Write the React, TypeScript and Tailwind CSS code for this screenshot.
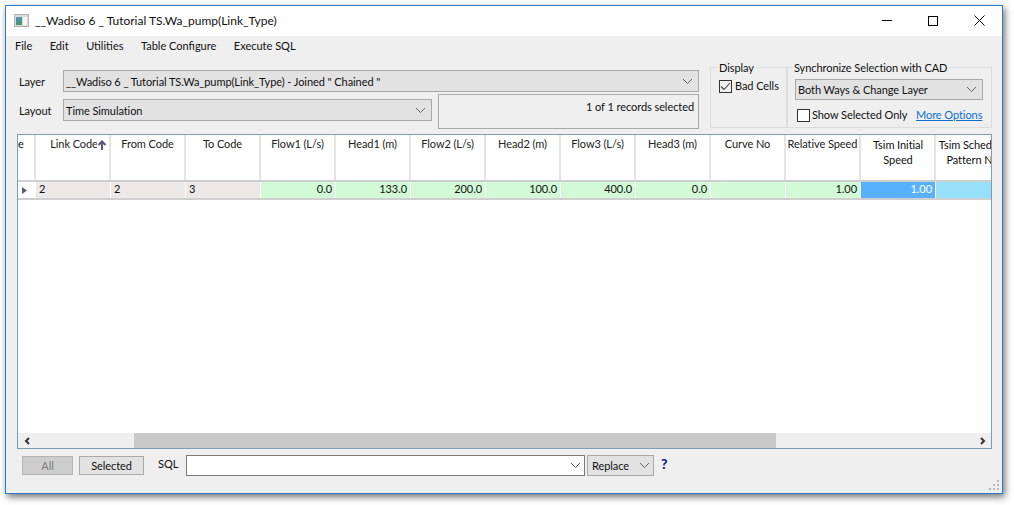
import React from 'react';

const FONT = "font-['Lato',sans-serif]";

const Chevron = ({ className = '' }: { className?: string }) => (
    <svg width="11" height="7" viewBox="0 0 11 7" className={className}>
        <path d="M1 1l4.5 4.5L10 1" fill="none" stroke="#606060" strokeWidth="1" />
    </svg>
);

const Select = ({ text, className = '' }: { text: string; className?: string }) => (
    <div className={`flex items-center justify-between border border-[#a9a9a9] bg-[#e2e2e2] pl-[2px] pr-[3px] ${className}`}>
        <span className="whitespace-pre">{text}</span>
        <Chevron className="mr-[2px] shrink-0" />
    </div>
);

const columns = [
    { title: 'Link Code', value: '2', kind: 'key', sort: true },
    { title: 'From Code', value: '2', kind: 'key' },
    { title: 'To Code', value: '3', kind: 'key' },
    { title: 'Flow1 (L/s)', value: '0.0', kind: 'ok' },
    { title: 'Head1 (m)', value: '133.0', kind: 'ok' },
    { title: 'Flow2 (L/s)', value: '200.0', kind: 'ok' },
    { title: 'Head2 (m)', value: '100.0', kind: 'ok' },
    { title: 'Flow3 (L/s)', value: '400.0', kind: 'ok' },
    { title: 'Head3 (m)', value: '0.0', kind: 'ok' },
    { title: 'Curve No', value: '', kind: 'ok' },
    { title: 'Relative Speed', value: '1.00', kind: 'ok' },
];

export default function App() {
    return (
        <div className={`h-[505px] w-[1014px] overflow-hidden bg-white pl-[5px] pt-[5px] text-[11px] leading-[15px] tracking-[-0.07px] text-[#111] ${FONT}`}>
            <div className="flex h-[489px] w-[998px] flex-col border border-[#2b7cc9] bg-[#efefef] shadow-[2px_3px_7px_rgba(0,0,0,0.55)]">
                {/* Title bar */}
                <div className="flex h-[30px] shrink-0 items-center bg-white pb-[1px] pl-[8px]">
                    <svg width="15" height="13" viewBox="0 0 15 13" className="mr-[6px]">
                        <defs>
                            <linearGradient id="pane" x1="0" y1="0" x2="0" y2="1">
                                <stop offset="0" stopColor="#5a8fb0" />
                                <stop offset="1" stopColor="#3f9a6a" />
                            </linearGradient>
                        </defs>
                        <rect x="0.5" y="0.5" width="14" height="12" fill="#dcdcdc" stroke="#b0b0b0" />
                        <rect x="2" y="3" width="6" height="8" fill="url(#pane)" />
                        <rect x="9" y="3" width="4" height="8" fill="#f6f6f6" />
                    </svg>
                    <span className="flex-1 text-[12px] tracking-normal">__Wadiso 6 _ Tutorial TS.Wa_pump(Link_Type)</span>
                    <div className="flex items-center">
                        <div className="flex w-[46px] justify-center">
                            <div className="h-px w-[10px] bg-black" />
                        </div>
                        <div className="flex w-[46px] justify-center">
                            <div className="h-[10px] w-[10px] border border-black" />
                        </div>
                        <div className="flex w-[46px] justify-center">
                            <svg width="11" height="11" viewBox="0 0 11 11">
                                <path d="M0.5 0.5l10 10M10.5 0.5l-10 10" stroke="#000" fill="none" />
                            </svg>
                        </div>
                    </div>
                </div>

                {/* Menu */}
                <div className="flex h-[19px] shrink-0 items-center gap-[17.5px] pl-[9px] tracking-normal">
                    <span>File</span>
                    <span>Edit</span>
                    <span>Utilities</span>
                    <span>Table Configure</span>
                    <span>Execute SQL</span>
                </div>

                {/* Filters */}
                <div className="flex h-[79px] shrink-0 pl-[13px] pr-[9px] pt-[15px]">
                    <div className="flex w-[680px] shrink-0 flex-col">
                        <div className="flex h-[22px] items-center">
                            <span className="w-[44px] shrink-0">Layer</span>
                            <Select text={'__Wadiso 6 _ Tutorial TS.Wa_pump(Link_Type) - Joined " Chained "'} className="h-[22px] w-[636px]" />
                        </div>
                        <div className="flex">
                            <div className="mt-[7px] flex h-[22px] items-center">
                                <span className="w-[44px] shrink-0">Layout</span>
                                <Select text="Time Simulation" className="h-[22px] w-[369px]" />
                            </div>
                            <div className="ml-[6px] mt-[2px] h-[35px] w-[261px] border border-[#a9a9a9] pr-[4px] pt-[4px] text-right">
                                1 of 1 records selected
                            </div>
                        </div>
                    </div>
                    <div className="relative ml-[11px] mt-[-3px] h-[61px] w-[77px] shrink-0 border border-[#dcdcdc] pl-[8px] pt-[11px]">
                        <span className="absolute left-[7px] top-[-8px] bg-[#efefef] pl-px pr-[2px]">Display</span>
                        <div className="flex items-center gap-[3px]">
                            <div className="flex h-[13px] w-[13px] shrink-0 items-center justify-center border border-[#333] bg-[#efefef]">
                                <svg width="11" height="9" viewBox="0 0 11 9">
                                    <path d="M1 4.5l3 3L10 1" fill="none" stroke="#444" strokeWidth="1.1" />
                                </svg>
                            </div>
                            <span className="mt-[-1px]">Bad Cells</span>
                        </div>
                    </div>
                    <div className="relative mt-[-3px] h-[61px] w-[205px] shrink-0 border border-[#dcdcdc] pl-[7px] pt-[11px]">
                        <span className="absolute left-[5px] top-[-8px] whitespace-nowrap bg-[#efefef] pl-px pr-[2px]">Synchronize Selection with CAD</span>
                        <Select text="Both Ways & Change Layer" className="h-[21px] w-[188px]" />
                        <div className="ml-[2px] mt-[8px] flex items-center whitespace-nowrap">
                            <div className="mr-[2px] h-[13px] w-[13px] shrink-0 border border-[#333] bg-white" />
                            <span className="mt-[-1px] w-[104px]">Show Selected Only</span>
                            <span className="mt-[-1px] text-[#0a6fd0] underline">More Options</span>
                        </div>
                    </div>
                </div>

                {/* Grid */}
                <div className="ml-[11px] mr-[9px] flex h-[315px] w-[975px] shrink-0 flex-col overflow-hidden border border-[#7f9db9] bg-white">
                    <div className="flex h-[47px] shrink-0 border-b-2 border-[#cfcfcf]">
                        <div className="w-[18px] shrink-0 overflow-hidden border-r-2 border-[#e4e4e4] pt-px">e</div>
                        {columns.map((c) => (
                            <div key={c.title} className={`relative w-[75px] shrink-0 whitespace-nowrap border-r-2 border-[#e4e4e4] pt-px text-center text-[#222] ${c.sort ? 'pl-[3px]' : ''}`}>
                                {c.title}
                                {c.sort && (
                                    <svg width="10" height="10" viewBox="0 0 10 10" className="absolute right-[2px] top-[5px] bg-white">
                                        <path d="M5 10V2M1.5 5L5 1.5 8.5 5" fill="none" stroke="#5a5a78" strokeWidth="2" />
                                    </svg>
                                )}
                            </div>
                        ))}
                        <div className="w-[75px] shrink-0 border-r-2 border-[#e4e4e4] pl-px pt-[2px] text-center">Tsim Initial<br />Speed</div>
                        <div className="w-[56px] shrink-0 overflow-hidden whitespace-nowrap pt-[2px] text-center">
                            <div className="w-[73px]">Tsim Schedule<br />Pattern No</div>
                        </div>
                    </div>
                    <div className="flex h-[18px] shrink-0 border-b-2 border-[#cfcfcf] leading-[14px]">
                        <div className="flex w-[18px] shrink-0 items-center pl-[4px]">
                            <svg width="5" height="7" viewBox="0 0 5 7"><path d="M0 0l5 3.5L0 7z" fill="#55606a" /></svg>
                        </div>
                        {columns.map((c) => (
                            <div key={c.title} className={`w-[75px] shrink-0 border-r border-white px-[3px] ${c.kind === 'key' ? 'bg-[#ece8e8] text-left' : 'bg-[#d2fad6] text-right'}`}>
                                {c.value}
                            </div>
                        ))}
                        <div className="w-[75px] shrink-0 border-r border-white bg-[#59b1fe] px-[3px] text-right text-white">1.00</div>
                        <div className="w-[56px] shrink-0 bg-[#98dffa]" />
                    </div>
                    <div className="flex-1" />
                    <div className="flex h-[15px] shrink-0 items-center bg-[#efefef]">
                        <div className="flex w-[17px] shrink-0 justify-center">
                            <svg width="6" height="8" viewBox="0 0 6 8"><path d="M5 1L2 4l3 3" fill="none" stroke="#333" strokeWidth="2" /></svg>
                        </div>
                        <div className="ml-[99px] h-[15px] w-[642px] bg-[#c9c9c9]" />
                        <div className="flex-1" />
                        <div className="flex w-[17px] shrink-0 justify-center">
                            <svg width="6" height="8" viewBox="0 0 6 8"><path d="M1 1l3 3-3 3" fill="none" stroke="#333" strokeWidth="2" /></svg>
                        </div>
                    </div>
                </div>

                {/* Footer */}
                <div className="relative flex flex-1 items-start pl-[16px] pt-[6px]">
                    <div className="mt-[1px] flex h-[19px] w-[51px] items-center justify-center border border-[#b4b4b4] bg-[#cdcdcd] text-[#7a7a7a]">All</div>
                    <div className="ml-[6px] mt-[1px] flex h-[19px] w-[65px] items-center justify-center border border-[#a9a9a9] bg-[#e2e2e2]">Selected</div>
                    <span className="ml-[14px] mt-[1px] w-[28px]">SQL</span>
                    <div className="flex h-[21px] w-[399px] items-center justify-end border border-[#7a7a7a] bg-white pr-[3px]">
                        <Chevron />
                    </div>
                    <div className="ml-[2px] flex h-[21px] w-[67px] items-center justify-between border border-[#a9a9a9] bg-[#e2e2e2] pl-[4px] pr-[3px]">
                        <span>Replace</span>
                        <Chevron />
                    </div>
                    <span className="ml-[7px] mt-[1px] text-[14px] font-bold text-[#0a0a78]">?</span>
                    <svg width="12" height="12" viewBox="0 0 12 12" className="absolute bottom-[2px] right-[2px]">
                        <path d="M9 1h2v2H9zM5 5h2v2H5zM9 5h2v2H9zM1 9h2v2H1zM5 9h2v2H5zM9 9h2v2H9z" fill="#b8b8b8" />
                    </svg>
                </div>
            </div>
        </div>
    );
}
